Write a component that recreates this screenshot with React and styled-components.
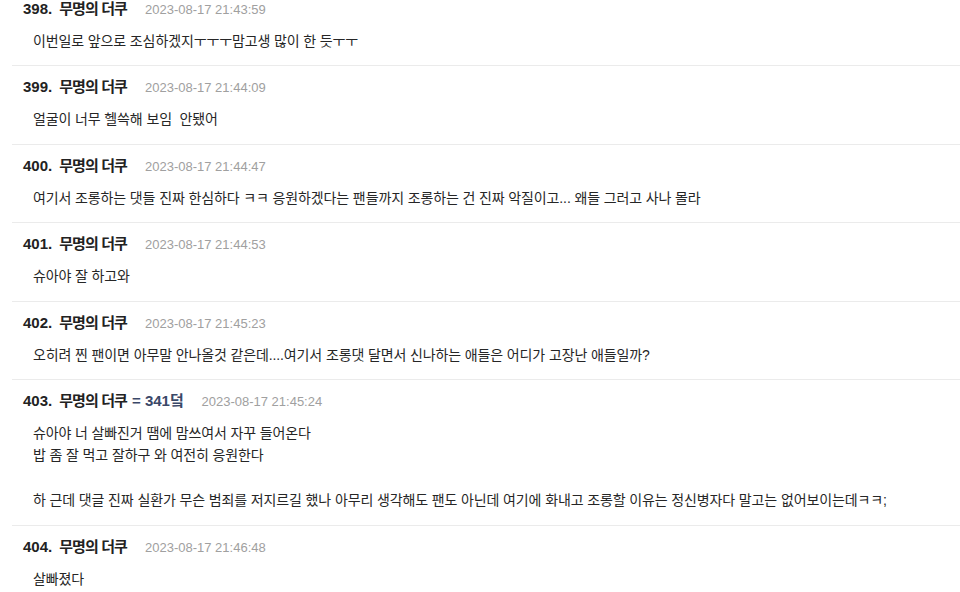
import React from "react"
import styled, { createGlobalStyle } from "styled-components"

const GlobalStyle = createGlobalStyle`
  html, body {
    margin: 0;
    padding: 0;
    background: #ffffff;
  }
  body {
    font-family: "Liberation Sans", "Noto Sans CJK KR", sans-serif;
    color: #222222;
    overflow: hidden;
  }
`

const List = styled.div`
  margin: -12px 0 0 12px;
  display: flex;
  flex-direction: column;
`

const Row = styled.div`
  display: flex;
  flex-direction: column;
  gap: 11px;
  padding: 11px 0 13px;
  border-bottom: 1px solid #ebebeb;
`

const Header = styled.div`
  display: flex;
  align-items: baseline;
  height: 20px;
  line-height: 20px;
  padding-left: 11px;
  white-space: nowrap;
`

const Num = styled.span`
  font-size: 15px;
  font-weight: 700;
  color: #222222;
`

const Name = styled.span`
  margin-left: 7px;
  font-size: 15px;
  font-weight: 700;
  letter-spacing: -0.9px;
  color: #222222;
`

const Tag = styled.span`
  margin-left: 5px;
  font-size: 15px;
  font-weight: 700;
  letter-spacing: -0.3px;
  color: #3a4868;

  b {
    letter-spacing: 0;
  }
`

const Date = styled.span`
  margin-left: 18px;
  font-size: 13px;
  color: #a0a0a0;
`

const Body = styled.div`
  padding-left: 21px;
  font-size: 14px;
  letter-spacing: -0.12px;
  line-height: 1.6;
  color: #262626;
  white-space: pre-wrap;
`

const comments = [
  { no: 398, date: "2023-08-17 21:43:59", text: "이번일로 앞으로 조심하겠지ㅜㅜㅜ맘고생 많이 한 듯ㅜㅜ" },
  { no: 399, date: "2023-08-17 21:44:09", text: "얼굴이 너무 헬쓱해 보임  안됐어" },
  {
    no: 400,
    date: "2023-08-17 21:44:47",
    text: "여기서 조롱하는 댓들 진짜 한심하다 ㅋㅋ 응원하겠다는 팬들까지 조롱하는 건 진짜 악질이고... 왜들 그러고 사나 몰라",
  },
  { no: 401, date: "2023-08-17 21:44:53", text: "슈아야 잘 하고와" },
  {
    no: 402,
    date: "2023-08-17 21:45:23",
    text: "오히려 찐 팬이면 아무말 안나올것 같은데....여기서 조롱댓 달면서 신나하는 애들은 어디가 고장난 애들일까?",
  },
  {
    no: 403,
    date: "2023-08-17 21:45:24",
    tag: "341",
    text: "슈아야 너 살빠진거 땜에 맘쓰여서 자꾸 들어온다\n밥 좀 잘 먹고 잘하구 와 여전히 응원한다\n\n하 근데 댓글 진짜 실환가 무슨 범죄를 저지르길 했나 아무리 생각해도 팬도 아닌데 여기에 화내고 조롱할 이유는 정신병자다 말고는 없어보이는데ㅋㅋ;",
  },
  { no: 404, date: "2023-08-17 21:46:48", text: "살빠졌다" },
]

const Comment = ({ no, date, tag, text }) => (
  <Row>
    <Header>
      <Num>{no}.</Num>
      <Name>무명의 더쿠</Name>
      {tag && (
        <Tag>
          <b>= {tag}</b>덬
        </Tag>
      )}
      <Date>{date}</Date>
    </Header>
    <Body>{text}</Body>
  </Row>
)

export default function App() {
  return (
    <>
      <GlobalStyle />
      <List>
        {comments.map(c => (
          <Comment key={c.no} {...c} />
        ))}
      </List>
    </>
  )
}
